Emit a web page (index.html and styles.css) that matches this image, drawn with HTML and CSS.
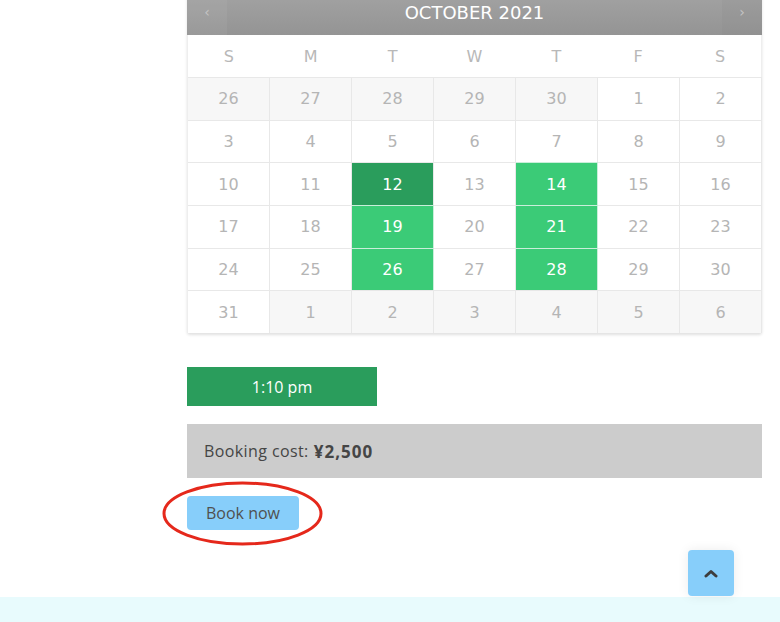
FILE: index.html
```html
<!DOCTYPE html>
<html lang="en">
<head>
    <meta charset="UTF-8">
    <meta name="viewport" content="width=device-width, initial-scale=1.0">
    <title>Booking</title>
    <link rel="stylesheet" href="styles.css">
</head>
<body>
    <div class="container">
        <div class="calendar">
            <div class="cal-head">
                <span class="nav prev">&lsaquo;</span>
                <span class="title">OCTOBER 2021</span>
                <span class="nav next">&rsaquo;</span>
            </div>
            <div class="weekdays">
                <span>S</span><span>M</span><span>T</span><span>W</span><span>T</span><span>F</span><span>S</span>
            </div>
            <div class="days">
                <span class="other">26</span><span class="other">27</span><span class="other">28</span><span class="other">29</span><span class="other">30</span><span>1</span><span>2</span>
                <span>3</span><span>4</span><span>5</span><span>6</span><span>7</span><span>8</span><span>9</span>
                <span>10</span><span>11</span><span class="selected">12</span><span>13</span><span class="open">14</span><span>15</span><span>16</span>
                <span>17</span><span>18</span><span class="open">19</span><span>20</span><span class="open">21</span><span>22</span><span>23</span>
                <span>24</span><span>25</span><span class="open">26</span><span>27</span><span class="open">28</span><span>29</span><span>30</span>
                <span>31</span><span class="other">1</span><span class="other">2</span><span class="other">3</span><span class="other">4</span><span class="other">5</span><span class="other">6</span>
            </div>
        </div>

        <button class="slot">1:10 pm</button>

        <div class="cost">Booking cost: <strong>&yen;2,500</strong></div>

        <div class="book-wrap">
            <button class="book">Book now</button>
            <svg class="circle" width="163" height="67" viewBox="0 0 163 67">
                <ellipse cx="81.5" cy="33.5" rx="78.5" ry="30.5" fill="none" stroke="#e5281b" stroke-width="3"/>
            </svg>
        </div>
    </div>

    <footer class="footer"></footer>

    <a class="to-top" href="#">
        <svg width="14" height="9" viewBox="0 0 14 9">
            <path d="M2 7 L7 2.5 L12 7" fill="none" stroke="#3d3d3d" stroke-width="3" stroke-linecap="round" stroke-linejoin="round"/>
        </svg>
    </a>
</body>
</html>
```

FILE: styles.css
```css
body { margin: 0; background: #fff; font-family: "Open Sans", "DejaVu Sans", sans-serif; }
.container { padding-left: 187px; width: 575px; }

.calendar { width: 575px; margin-top: -11px; box-shadow: 0 2px 3px rgba(0,0,0,0.12); border-radius: 0 0 3px 3px; font-family: "DejaVu Sans", Verdana, sans-serif; }
.cal-head { height: 46px; display: flex; align-items: center; justify-content: space-between; background: linear-gradient(#a4a4a4, #949494); color: #fff; }
.cal-head .title { font-size: 18px; padding-top: 1px; }
.cal-head .nav { width: 40px; text-align: center; font-size: 14px; color: #c4c4c4; }
.cal-head .prev { background: rgba(255,255,255,0.05); height: 100%; line-height: 46px; }
.cal-head .next { background: rgba(0,0,0,0.02); height: 100%; line-height: 46px; }

.weekdays { display: grid; grid-template-columns: repeat(7, 1fr); height: 42px; border-left: 1px solid #eee; border-right: 1px solid #eee; }
.weekdays span { display: flex; align-items: center; justify-content: center; font-size: 16px; color: #b8b8b8; }

.days { display: grid; grid-template-columns: repeat(7, 1fr); border-left: 1px solid #eee; }
.days span { height: 42.7px; box-sizing: border-box; display: flex; align-items: center; justify-content: center; border-top: 1px solid #e8e8e8; border-right: 1px solid #e8e8e8; font-size: 16px; color: #b5b5b5; background: #fff; }
.days .other { background: #f7f7f7; }
.days .open { background: #3bcb77; color: #fff; border-color: #c9eeda; }
.days .selected { background: #2a9d5c; color: #fff; }

.slot { display: block; margin-top: 34px; width: 190px; height: 39px; border: 0; background: #2a9d5c; color: #fff; font-family: "Open Sans", sans-serif; font-size: 16px; }

.cost { margin-top: 18px; height: 54px; box-sizing: border-box; padding: 0 17px; display: flex; align-items: center; gap: 5px; background: #cccccc; color: #454545; font-size: 16px; letter-spacing: 0.4px; }
.cost strong { font-weight: 700; font-size: 17px; letter-spacing: 1px; }

.book-wrap { position: relative; margin-top: 18px; width: 112px; }
.book { display: block; width: 112px; height: 34px; border: 0; border-radius: 4px; background: #87cefa; color: #505050; font-family: "Open Sans", sans-serif; font-size: 16px; }
.circle { position: absolute; left: -26px; top: -16px; }

.footer { margin-top: 67px; height: 40px; background: #e8fbfd; }

.to-top { position: fixed; left: 688px; top: 550px; width: 46px; height: 46px; border-radius: 4px; background: #87cefa; display: flex; align-items: center; justify-content: center; box-shadow: 0 0 12px rgba(0,0,0,0.08); }
```
